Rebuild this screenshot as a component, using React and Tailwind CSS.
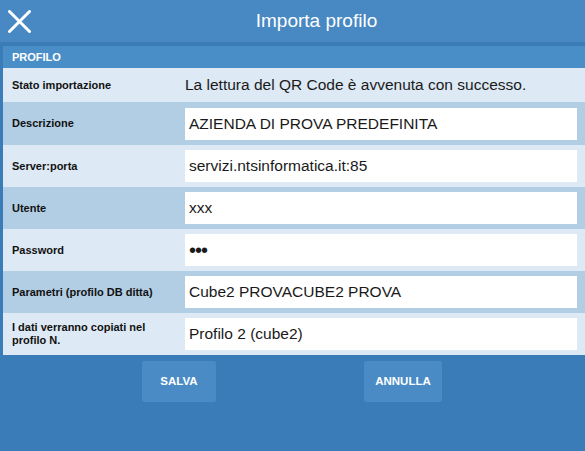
import React from 'react';

const rows = [
    { label: 'Descrizione', value: 'AZIENDA DI PROVA PREDEFINITA', tone: 'blue', h: 'h-[43px]' },
    { label: 'Server:porta', value: 'servizi.ntsinformatica.it:85', tone: 'light' },
    { label: 'Utente', value: 'xxx', tone: 'blue' },
    { label: 'Password', value: 'password', tone: 'light', secret: true },
    { label: 'Parametri (profilo DB ditta)', value: 'Cube2 PROVACUBE2 PROVA', tone: 'blue' },
    { label: 'I dati verranno copiati nel profilo N.', value: 'Profilo 2 (cube2)', tone: 'light' },
];

const FieldRow = ({ label, value, tone, h = 'h-[42px]', secret }) => (
    <div className={`flex items-center ${h} ${tone === 'blue' ? 'bg-[#b1cee4]' : 'bg-[#dde9f4]'}`}>
        <div className="w-[182px] shrink-0 pl-[9px] pr-2 text-[11px] font-bold leading-[13px] text-[#111]">
            {label}
        </div>
        <div className="flex-1 mr-[8px] h-[32px] bg-white flex items-center pl-[4px] text-[15.5px] text-[#1a1a1a]">
            {secret ? (
                <span className="text-[20px] leading-none tracking-[-1px]">•••</span>
            ) : (
                value
            )}
        </div>
    </div>
);

export default function App() {
    return (
        <div className="w-[585px] h-[451px] bg-[#3a7cb7] flex flex-col overflow-hidden" style={{ fontFamily: '"Liberation Sans", Arial, sans-serif' }}>
            {/* Header */}
            <div className="h-[42px] bg-[#4888c3] flex items-center shrink-0">
                <div className="w-[48px] h-full flex items-center pl-[8px]">
                    <svg width="23" height="23" viewBox="0 0 23 23">
                        <path d="M1.5 1.5 L21.5 21.5 M21.5 1.5 L1.5 21.5" stroke="white" strokeWidth="3" strokeLinecap="round" />
                    </svg>
                </div>
                <div className="flex-1 text-center text-white text-[19px]">Importa profilo</div>
            </div>

            {/* Panel */}
            <div className="mt-[4px] ml-[3px] flex flex-col">
                <div className="h-[22px] bg-[#4a8ec8] flex items-center pl-[9px] text-[11px] font-bold text-white">
                    PROFILO
                </div>
                <div className="h-[34px] bg-[#dde9f4] flex items-center">
                    <div className="w-[182px] shrink-0 pl-[9px] text-[11px] font-bold text-[#111]">Stato importazione</div>
                    <div className="text-[15.5px] text-[#1a1a1a]">La lettura del QR Code è avvenuta con successo.</div>
                </div>
                {rows.map((r) => (
                    <FieldRow key={r.label} {...r} />
                ))}
            </div>

            {/* Buttons */}
            <div className="flex mt-[6px] pl-[142px]">
                <button className="w-[74px] h-[41px] rounded-[2px] bg-[#4a8bc5] text-white text-[11.5px] font-bold">
                    SALVA
                </button>
                <button className="ml-[148px] w-[78px] h-[41px] rounded-[2px] bg-[#4a8bc5] text-white text-[11.5px] font-bold">
                    ANNULLA
                </button>
            </div>
        </div>
    );
}
